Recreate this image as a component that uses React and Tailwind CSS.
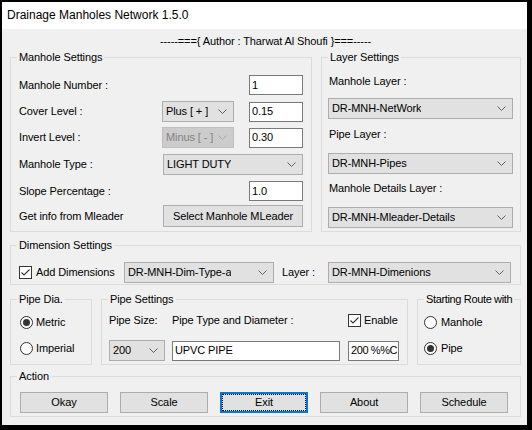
import React from 'react';

const Chevron = ({ disabled }) => (
  <svg width="9" height="5" viewBox="0 0 9 5" className="shrink-0">
    <polyline points="0.5,0.5 4.5,4.5 8.5,0.5" fill="none" stroke={disabled ? '#a8a8a8' : '#606060'} strokeWidth="1" />
  </svg>
);

const Combo = ({ value, className = '', disabled }) => (
  <div
    className={`flex h-[21px] items-center justify-between border pl-[3px] pr-[6px] ${
      disabled ? 'border-[#bfbfbf] bg-[#cccccc] text-[#838383]' : 'border-[#adadad] bg-[#e1e1e1]'
    } ${className}`}
  >
    <span className="truncate">{value}</span>
    <Chevron disabled={disabled} />
  </div>
);

const TextBox = ({ value, className = '' }) => (
  <div className={`flex h-[20px] items-center overflow-hidden whitespace-nowrap border border-[#7a7a7a] bg-white pl-[2px] ${className}`}>
    {value}
  </div>
);

const CheckBox = () => (
  <div className="flex h-[13px] w-[13px] shrink-0 items-center justify-center border border-[#333333] bg-white">
    <svg width="11" height="11" viewBox="0 0 11 11">
      <polyline points="1.5,5.5 4,8 9.5,2.5" fill="none" stroke="#333333" strokeWidth="1.1" />
    </svg>
  </div>
);

const Radio = ({ checked }) => (
  <div className="flex h-[13px] w-[13px] shrink-0 items-center justify-center rounded-full border border-[#333333] bg-white">
    {checked && <div className="h-[7px] w-[7px] rounded-full bg-[#333333]" />}
  </div>
);

const Group = ({ title, className = '', titleClass = '', children }) => (
  <div className={`relative border border-[#dcdcdc] ${className}`}>
    <span className={`absolute -top-[7px] left-[6px] whitespace-nowrap bg-[#f0f0f0] px-[2px] leading-[13px] ${titleClass}`}>
      {title}
    </span>
    {children}
  </div>
);

const Button = ({ label, focused }) => (
  <button
    className={`h-[21px] w-[88px] bg-[#e1e1e1] leading-[13px] ${
      focused
        ? 'border-2 border-[#0078d7] outline-1 outline-dotted outline-black outline-offset-[-3px]'
        : 'border border-[#adadad]'
    }`}
  >
    {label}
  </button>
);

const App = () => {
  return (
    <div className="h-[430px] w-[532px] bg-black pb-[5px] pl-[2px] pr-[5px] pt-[2px] font-['Liberation_Sans',Arial,sans-serif] text-[11px] leading-[13px] tracking-[-0.1px] text-black">
      <div className="flex h-full flex-col bg-[#f0f0f0]">
        {/* Title bar */}
        <div className="flex h-[27px] items-center bg-white pl-[5px] text-[12px] tracking-normal">
          Drainage Manholes Network 1.5.0
        </div>

        <div className="flex flex-col whitespace-nowrap pl-[8px] pr-[6px]">
          <div className="pt-[6px] text-center">-----==={'{'} Author : Tharwat Al Shoufi {'}'}===-----</div>

          {/* Manhole + Layer settings */}
          <div className="mt-[9px] flex gap-[9px]">
            <Group title="Manhole Settings" className="flex h-[175px] w-[302px] flex-col px-[8px]">
              <div className="mt-[17px] flex h-[20px] items-center justify-between">
                <span>Manhole Number :</span>
                <TextBox value="1" className="w-[54px]" />
              </div>
              <div className="mt-[6px] flex h-[21px] items-center justify-between">
                <span>Cover Level :</span>
                <div className="flex items-center gap-[15px]">
                  <Combo value="Plus [ + ]" className="w-[72px]" />
                  <TextBox value="0.15" className="w-[54px]" />
                </div>
              </div>
              <div className="mt-[5px] flex h-[21px] items-center justify-between">
                <span>Invert Level :</span>
                <div className="flex items-center gap-[15px]">
                  <Combo value="Minus [ - ]" className="w-[72px]" disabled />
                  <TextBox value="0.30" className="w-[54px]" />
                </div>
              </div>
              <div className="mt-[6px] flex h-[21px] items-center justify-between">
                <span>Manhole Type :</span>
                <Combo value="LIGHT DUTY" className="w-[140px]" />
              </div>
              <div className="mt-[6px] flex h-[20px] items-center justify-between">
                <span>Slope Percentage :</span>
                <TextBox value="1.0" className="w-[54px]" />
              </div>
              <div className="mt-[4px] flex h-[22px] items-center justify-between">
                <span>Get info from Mleader</span>
                <button className="h-[22px] w-[140px] border border-[#adadad] bg-[#e1e1e1] leading-[13px]">
                  Select Manhole MLeader
                </button>
              </div>
            </Group>

            <Group title="Layer Settings" className="flex h-[175px] w-[200px] flex-col pl-[6px] pr-[7px]">
              <span className="mt-[17px] pl-[1px]">Manhole Layer :</span>
              <Combo value="DR-MNH-NetWork" className="mt-[10px]" />
              <span className="mt-[9px] pl-[1px]">Pipe Layer :</span>
              <Combo value="DR-MNH-Pipes" className="mt-[12px]" />
              <span className="mt-[8px] pl-[1px]">Manhole Details Layer :</span>
              <Combo value="DR-MNH-Mleader-Details" className="mt-[12px]" />
            </Group>
          </div>

          {/* Dimension settings */}
          <Group title="Dimension Settings" className="mt-[13px] flex h-[40px] items-start pl-[8px]">
            <div className="mt-[16px] flex h-[21px] items-center">
              <div className="flex w-[105px] items-center gap-[4px]">
                <CheckBox />
                <span>Add Dimensions</span>
              </div>
              <Combo value="DR-MNH-Dim-Type-a" className="w-[150px]" />
              <span className="ml-[8px] w-[46px]">Layer :</span>
              <Combo value="DR-MNH-Dimenions" className="w-[183px]" />
            </div>
          </Group>

          {/* Pipe row */}
          <div className="mt-[14px] flex h-[66px] gap-[9px]">
            <Group title="Pipe Dia." className="flex w-[82px] flex-col pl-[9px]">
              <div className="mt-[16px] flex h-[13px] items-center gap-[3px]">
                <Radio checked />
                <span>Metric</span>
              </div>
              <div className="mt-[13px] flex h-[13px] items-center gap-[3px]">
                <Radio />
                <span>Imperial</span>
              </div>
            </Group>

            <Group title="Pipe Settings" className="flex w-[307px] flex-col pl-[7px]">
              <div className="mt-[14px] flex h-[13px] items-center">
                <span className="w-[63px]">Pipe Size:</span>
                <span className="w-[176px]">Pipe Type and Diameter :</span>
                <CheckBox />
                <span className="ml-[3px]">Enable</span>
              </div>
              <div className="mt-[13px] flex h-[21px] items-center">
                <Combo value="200" className="w-[56px]" />
                <TextBox value="UPVC PIPE" className="ml-[7px] w-[168px]" />
                <TextBox value="200 %%C" className="ml-[8px] w-[51px] tracking-[-0.4px]" />
              </div>
            </Group>

            <Group
              title="Starting Route with"
              titleClass="tracking-[-0.35px]"
              className="flex w-[104px] flex-col pl-[6px]"
            >
              <div className="mt-[16px] flex h-[13px] items-center gap-[4px]">
                <Radio />
                <span>Manhole</span>
              </div>
              <div className="mt-[13px] flex h-[13px] items-center gap-[4px]">
                <Radio checked />
                <span>Pipe</span>
              </div>
            </Group>
          </div>

          {/* Action */}
          <Group title="Action" className="mt-[11px] flex h-[41px] items-start pl-[9px]">
            <div className="mt-[15px] flex gap-[12px]">
              <Button label="Okay" />
              <Button label="Scale" />
              <Button label="Exit" focused />
              <Button label="About" />
              <Button label="Schedule" />
            </div>
          </Group>
        </div>
      </div>
    </div>
  );
};

export default App;
